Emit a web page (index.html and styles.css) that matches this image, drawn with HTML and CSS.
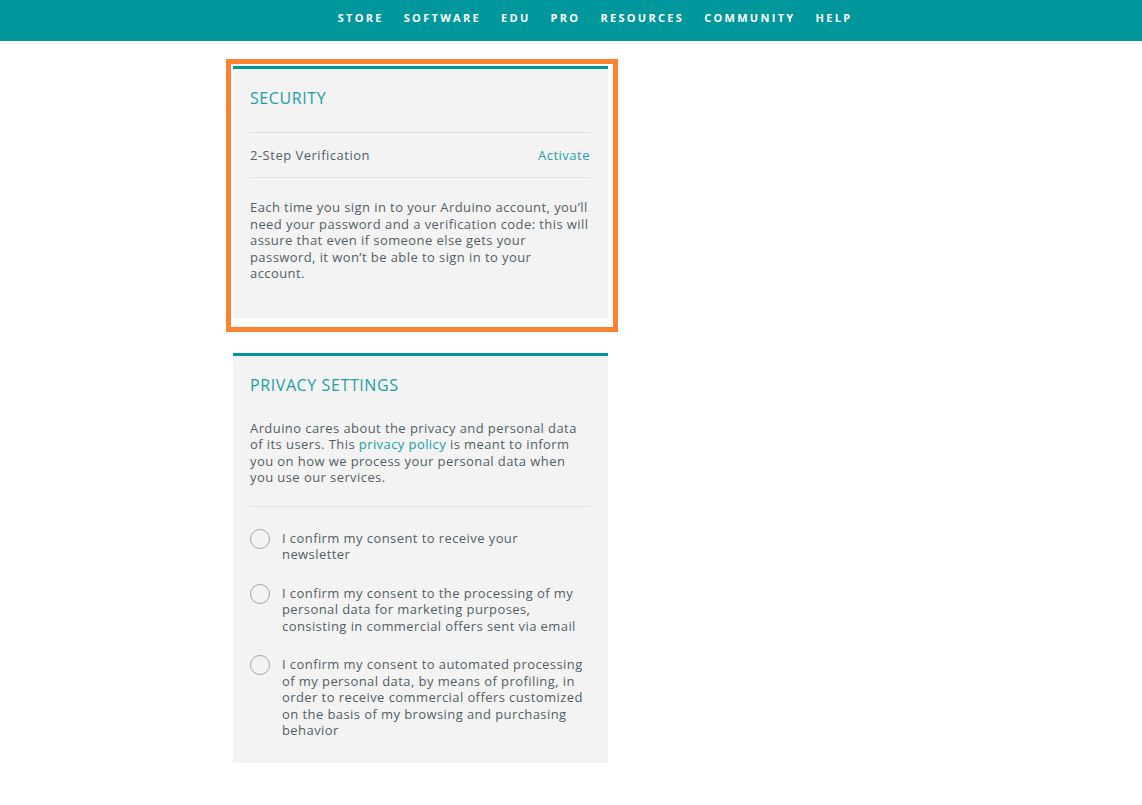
FILE: index.html
```html
<!DOCTYPE html>
<html>
<head>
<meta charset="utf-8">
<link rel="stylesheet" href="styles.css">
</head>
<body>
<header class="topbar">
  <nav class="nav">
    <a>STORE</a><a>SOFTWARE</a><a>EDU</a><a>PRO</a><a>RESOURCES</a><a>COMMUNITY</a><a>HELP</a>
  </nav>
</header>
<main class="main">
  <div class="highlight">
    <section class="card card-security">
      <h2 class="card-title">SECURITY</h2>
      <div class="row">
        <span>2-Step Verification</span>
        <a class="link">Activate</a>
      </div>
      <p class="text sec-text">Each time you sign in to your Arduino account, you’ll<br>need your password and a verification code: this will<br>assure that even if someone else gets your<br>password, it won’t be able to sign in to your<br>account.</p>
    </section>
  </div>
  <section class="card card-privacy">
    <h2 class="card-title">PRIVACY SETTINGS</h2>
    <p class="text priv-text">Arduino cares about the privacy and personal data<br>of its users. This <span class="link">privacy policy</span> is meant to inform<br>you on how we process your personal data when<br>you use our services.</p>
    <div class="options">
      <label class="option"><span class="radio"></span><span class="option-text">I confirm my consent to receive your<br>newsletter</span></label>
      <label class="option"><span class="radio"></span><span class="option-text">I confirm my consent to the processing of my<br>personal data for marketing purposes,<br>consisting in commercial offers sent via email</span></label>
      <label class="option"><span class="radio"></span><span class="option-text">I confirm my consent to automated processing<br>of my personal data, by means of profiling, in<br>order to receive commercial offers customized<br>on the basis of my browsing and purchasing<br>behavior</span></label>
    </div>
  </section>
</main>
</body>
</html>
```
FILE: styles.css
```css
* { box-sizing: border-box; }
body {
  margin: 0;
  background: #fff;
  font-family: "Open Sans", "Noto Sans", sans-serif;
  color: #535f66;
}
.topbar {
  height: 41px;
  background: #00979c;
  display: flex;
  justify-content: center;
}
.nav {
  display: flex;
  gap: 20px;
  padding-top: 11px;
  padding-left: 48px;
}
.nav a {
  color: #fff;
  font-weight: 700;
  font-size: 11px;
  letter-spacing: 2.3px;
  line-height: 14px;
}
.main {
  padding: 18px 0 40px 226px;
}
.highlight {
  width: 392px;
  border: 5px solid #ff8132;
  padding: 2px 5px 9px 2px;
}
.card {
  width: 375px;
  background: #f3f3f3;
  border-top: 3px solid #00979c;
  padding: 0 18px 0 17px;
}
.card-privacy {
  margin: 21px 0 0 7px;
  padding-bottom: 24px;
}
.card-security {
  padding-bottom: 36px;
}
.card-title {
  margin: 0;
  padding-top: 19px;
  font-size: 16px;
  line-height: 20px;
  font-weight: 400;
  color: #1aa0a6;
  letter-spacing: 0.6px;
}
.card-security .card-title {
  padding-bottom: 24px;
  border-bottom: 1px solid #e2e2e2;
}
.row {
  display: flex;
  justify-content: space-between;
  align-items: center;
  height: 45px;
  border-bottom: 1px solid #e2e2e2;
  font-size: 13px;
  letter-spacing: 0.5px;
}
.link {
  color: #1aa0a6;
}
.text {
  margin: 0;
  font-size: 13px;
  line-height: 16.5px;
  letter-spacing: 0.42px;
  white-space: nowrap;
}
.sec-text {
  padding-top: 21px;
}
.priv-text {
  margin-top: 25px;
  padding-bottom: 20px;
  border-bottom: 1px solid #e2e2e2;
}
.options {
  display: flex;
  flex-direction: column;
  gap: 22px;
  padding-top: 23px;
}
.option {
  display: flex;
  gap: 12px;
  font-size: 13px;
  line-height: 16.5px;
  letter-spacing: 0.42px;
  white-space: nowrap;
}
.radio {
  flex: none;
  width: 20px;
  height: 20px;
  border: 1.5px solid #a5a5a5;
  border-radius: 50%;
  margin-top: -1px;
}
.option-text {
  flex: 1;
}
```
